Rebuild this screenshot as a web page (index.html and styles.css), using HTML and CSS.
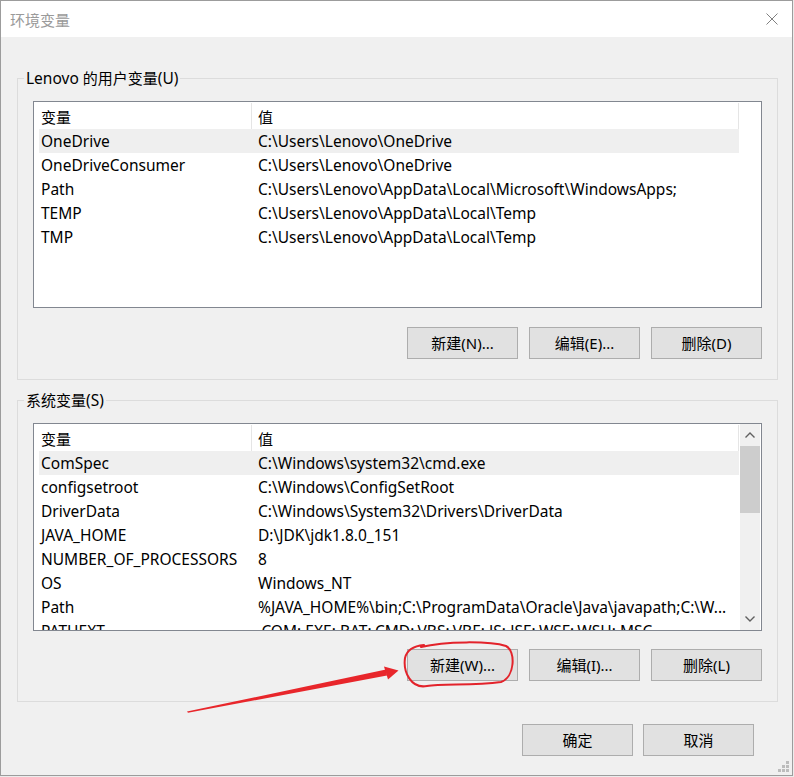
FILE: index.html
```html
<!DOCTYPE html>
<html lang="zh-CN">
<head>
<meta charset="utf-8">
<title>环境变量</title>
<link rel="stylesheet" href="styles.css">
</head>
<body>
<div class="window">
  <div class="titlebar">
    <span class="title">环境变量</span>
    <svg class="close" width="12" height="12" viewBox="0 0 12 12"><path d="M0.5 0.5 L11.5 11.5 M11.5 0.5 L0.5 11.5" stroke="#808080" stroke-width="1" fill="none"/></svg>
  </div>
  <div class="content">
    <fieldset class="group">
      <legend>Lenovo <span class="cjk">的用户变量</span>(U)</legend>
      <div class="list">
        <div class="list-main">
          <div class="row header"><div class="c1"><span class="cjk">变量</span></div><div class="c2"><span class="cjk">值</span></div></div>
          <div class="row sel"><div class="c1">OneDrive</div><div class="c2">C:\Users\Lenovo\OneDrive</div></div>
          <div class="row"><div class="c1">OneDriveConsumer</div><div class="c2">C:\Users\Lenovo\OneDrive</div></div>
          <div class="row"><div class="c1">Path</div><div class="c2">C:\Users\Lenovo\AppData\Local\Microsoft\WindowsApps;</div></div>
          <div class="row"><div class="c1">TEMP</div><div class="c2">C:\Users\Lenovo\AppData\Local\Temp</div></div>
          <div class="row"><div class="c1">TMP</div><div class="c2">C:\Users\Lenovo\AppData\Local\Temp</div></div>
        </div>
      </div>
      <div class="buttons">
        <button class="btn"><span class="cjk">新建</span>(N)...</button>
        <button class="btn"><span class="cjk">编辑</span>(E)...</button>
        <button class="btn"><span class="cjk">删除</span>(D)</button>
      </div>
    </fieldset>

    <fieldset class="group group-sys">
      <legend><span class="cjk">系统变量</span>(S)</legend>
      <div class="list list-tall">
        <div class="list-main">
          <div class="row header"><div class="c1"><span class="cjk">变量</span></div><div class="c2"><span class="cjk">值</span></div></div>
          <div class="row sel"><div class="c1">ComSpec</div><div class="c2">C:\Windows\system32\cmd.exe</div></div>
          <div class="row"><div class="c1">configsetroot</div><div class="c2">C:\Windows\ConfigSetRoot</div></div>
          <div class="row"><div class="c1">DriverData</div><div class="c2">C:\Windows\System32\Drivers\DriverData</div></div>
          <div class="row"><div class="c1">JAVA_HOME</div><div class="c2">D:\JDK\jdk1.8.0_151</div></div>
          <div class="row"><div class="c1">NUMBER_OF_PROCESSORS</div><div class="c2">8</div></div>
          <div class="row"><div class="c1">OS</div><div class="c2">Windows_NT</div></div>
          <div class="row"><div class="c1">Path</div><div class="c2">%JAVA_HOME%\bin;C:\ProgramData\Oracle\Java\javapath;C:\W...</div></div>
          <div class="row"><div class="c1">PATHEXT</div><div class="c2">.COM;.EXE;.BAT;.CMD;.VBS;.VBE;.JS;.JSE;.WSF;.WSH;.MSC</div></div>
        </div>
        <div class="scrollbar">
          <div class="sb-arrow"><svg width="10" height="6" viewBox="0 0 10 6"><polyline points="0.5,5.5 5,1 9.5,5.5" fill="none" stroke="#606060" stroke-width="1.4"/></svg></div>
          <div class="sb-thumb"></div>
          <div class="sb-track"></div>
          <div class="sb-arrow"><svg width="10" height="6" viewBox="0 0 10 6"><polyline points="0.5,0.5 5,5 9.5,0.5" fill="none" stroke="#606060" stroke-width="1.4"/></svg></div>
        </div>
      </div>
      <div class="buttons">
        <button class="btn"><span class="cjk">新建</span>(W)...</button>
        <button class="btn"><span class="cjk">编辑</span>(I)...</button>
        <button class="btn"><span class="cjk">删除</span>(L)</button>
      </div>
    </fieldset>

    <div class="footer">
      <button class="btn"><span class="cjk">确定</span></button>
      <button class="btn"><span class="cjk">取消</span></button>
    </div>
  </div>

  <svg class="gripper" width="12" height="12" viewBox="0 0 12 12">
    <rect x="8" y="0" width="3" height="3" fill="#bcbcbc"/>
    <rect x="4" y="4" width="3" height="3" fill="#bcbcbc"/>
    <rect x="8" y="4" width="3" height="3" fill="#bcbcbc"/>
    <rect x="0" y="8" width="3" height="3" fill="#bcbcbc"/>
    <rect x="4" y="8" width="3" height="3" fill="#bcbcbc"/>
    <rect x="8" y="8" width="3" height="3" fill="#bcbcbc"/>
  </svg>

  <svg class="annotation" width="793" height="776" viewBox="0 0 793 776">
    <path d="M421 647 C445 641 490 641 506 646 C516 651 515 677 501 682 C472 686 442 683 427 686 C411 689 403 672 405 658 C407 649 414 646 424 645" fill="none" stroke="#e3232b" stroke-width="2" stroke-linecap="round"/>
    <polygon points="187,711.6 386,669.5 387,675.5 188,712.8" fill="#e8262b"/>
    <polygon points="384,666.5 398.5,670.5 388,679.5" fill="#e8262b"/>
  </svg>
</div>
</body>
</html>
```

FILE: styles.css
```css
* { box-sizing: border-box; }

html, body {
  margin: 0;
  padding: 0;
}

body {
  background: #ececec;
  font-family: "Noto Sans", "Noto Sans CJK SC", sans-serif;
  font-size: 15.5px;
  color: #000;
}

.cjk {
  font-family: "Noto Sans CJK SC", sans-serif;
  font-size: 15px;
}

.window {
  position: relative;
  width: 793px;
  height: 776px;
  border: 1px solid #9c9c9c;
  background: #f0f0f0;
  overflow: hidden;
}

.titlebar {
  height: 36px;
  background: #fff;
  display: flex;
  align-items: center;
  justify-content: space-between;
  padding: 0 14px 0 9px;
}

.title {
  font-family: "Noto Sans CJK SC", sans-serif;
  font-size: 15px;
  color: #9a9a9a;
  margin-top: 0;
}

.close {
  display: block;
  margin-top: -1px;
}

.content {
  padding: 31px 14px 0 16px;
}

.group {
  margin: 0;
  padding: 13px 15px 20px 15px;
  border: 1px solid #dcdcdc;
  min-inline-size: 0;
}

.group-sys {
  margin-top: 10px;
}

.group legend {
  padding: 0 2px;
  margin-left: -9px;
  line-height: 20px;
  height: 20px;
}

.list {
  height: 207px;
  border: 1px solid #828790;
  background: #fff;
  display: flex;
  padding-left: 5px;
  overflow: hidden;
}

.list-tall {
  height: 208px;
}

.list-main {
  width: 700px;
  flex: none;
}

.row {
  display: flex;
  height: 24px;
  line-height: 24px;
  white-space: nowrap;
}

.row.header {
  height: 27px;
  padding-top: 3px;
}

.row.sel {
  background: #efefef;
}

.c1 {
  width: 213px;
  padding-left: 2px;
  flex: none;
  overflow: hidden;
}

.c2 {
  width: 487px;
  padding-left: 6px;
  flex: none;
  overflow: hidden;
}

.row.header .c1,
.row.header .c2 {
  border-right: 1px solid #e5e5e5;
  margin-top: -2px;
  padding-top: 2px;
  height: 26px;
}

.scrollbar {
  width: 20px;
  margin-left: 1px;
  flex: none;
  background: #f0f0f0;
  display: flex;
  flex-direction: column;
}

.sb-arrow {
  height: 22px;
  display: flex;
  align-items: center;
  justify-content: center;
}

.sb-thumb {
  height: 67px;
  background: #cdcdcd;
}

.sb-track {
  flex: 1;
}

.buttons {
  display: flex;
  justify-content: flex-end;
  gap: 11px;
  margin-top: 19px;
}

.group-sys .buttons {
  margin-top: 18px;
}

.btn {
  width: 111px;
  height: 32px;
  background: #e1e1e1;
  border: 1px solid #adadad;
  border-radius: 0;
  padding: 0;
  margin: 0;
  font-family: "Noto Sans", "Noto Sans CJK SC", sans-serif;
  font-size: 15px;
  color: #000;
  line-height: 30px;
}

.footer {
  display: flex;
  justify-content: flex-end;
  gap: 10px;
  margin-top: 22px;
  padding-right: 24px;
}

.gripper {
  position: absolute;
  right: 2px;
  bottom: 2px;
}

.annotation {
  position: absolute;
  left: -1px;
  top: -1px;
  pointer-events: none;
}
```
